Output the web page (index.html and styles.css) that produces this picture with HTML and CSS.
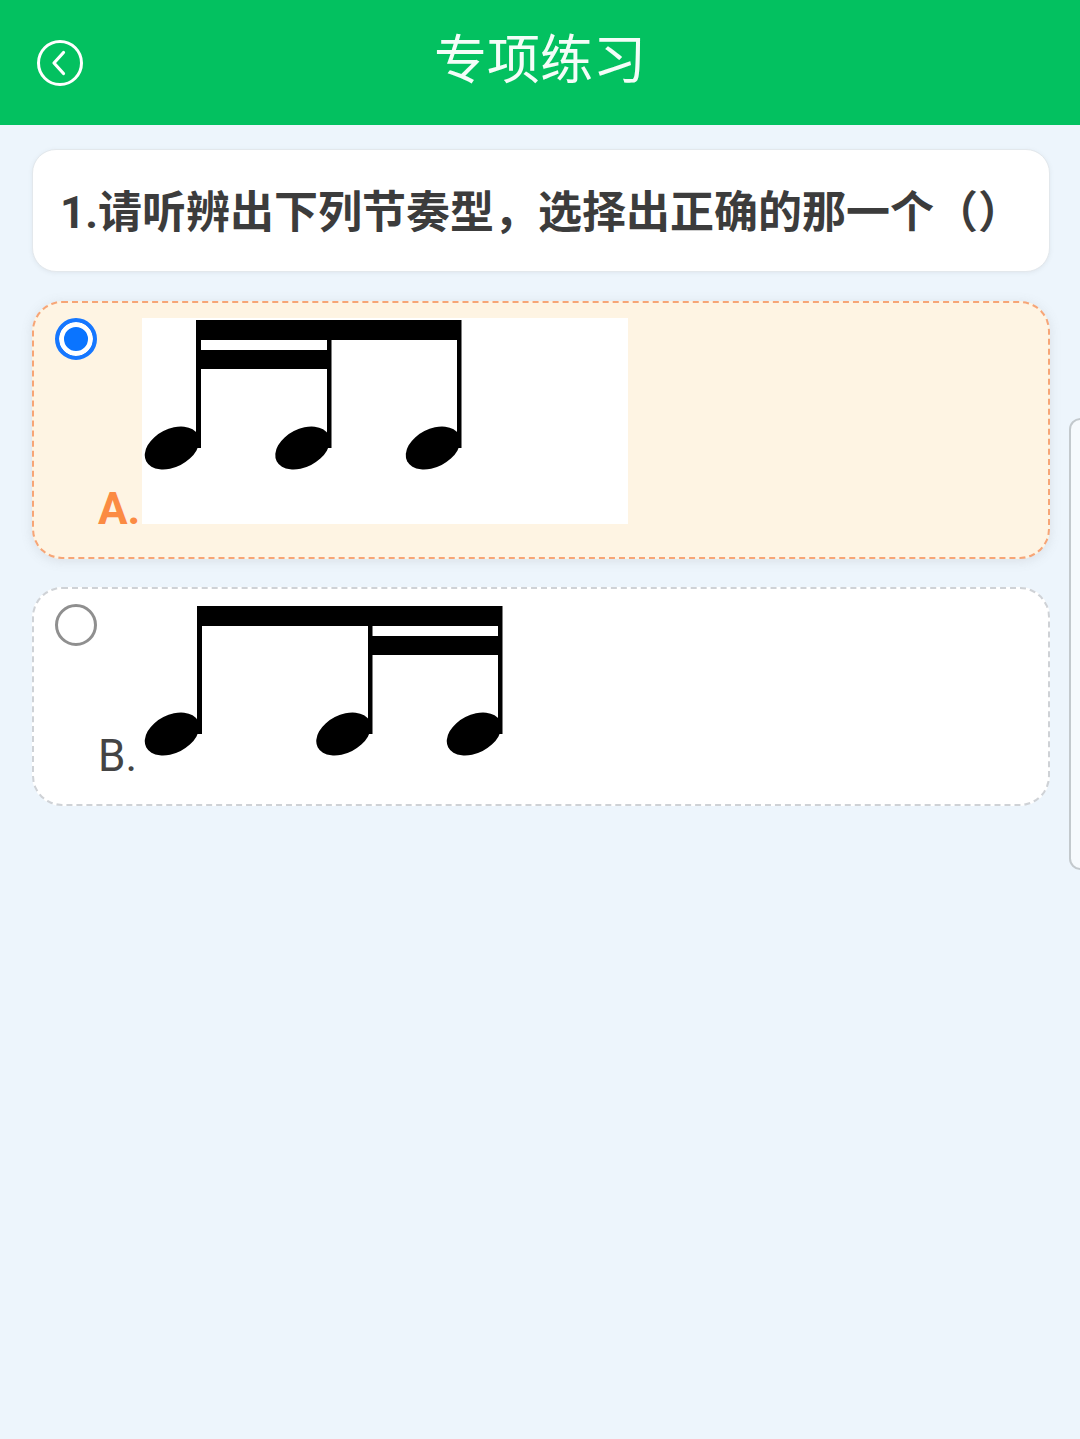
FILE: index.html
```html
<!DOCTYPE html>
<html lang="zh-CN">
<head>
<meta charset="utf-8">
<title>专项练习</title>
<link rel="stylesheet" href="styles.css">
</head>
<body>
<header class="topbar">
  <svg class="back" viewBox="0 0 48 48" aria-hidden="true">
    <ellipse cx="24" cy="24" rx="21.5" ry="21.5" fill="none" stroke="#fff" stroke-width="3"/>
    <path d="M27.5 13.5 L18 24 L27.5 34.5" fill="none" stroke="#fff" stroke-width="3.2" stroke-linecap="round" stroke-linejoin="round"/>
  </svg>
  <h1 class="title">专项练习</h1>
</header>

<main class="content">
  <section class="question">1.请听辨出下列节奏型，选择出正确的那一个（）</section>

  <div class="option option-selected">
    <span class="radio radio-on"></span>
    <div class="choice">
      <span class="letter">A.</span>
      <svg class="score score-a" viewBox="0 0 486 206" aria-hidden="true">
        <rect width="486" height="206" fill="#fff"/>
        <rect x="54" y="2" width="265" height="20"/>
        <rect x="54" y="32" width="134" height="19"/>
        <rect x="54" y="2" width="5" height="128"/>
        <rect x="185" y="2" width="4.5" height="128"/>
        <rect x="315" y="2" width="4.5" height="128"/>
        <ellipse cx="30" cy="130" rx="29" ry="19" transform="rotate(-27 30 130)"/>
        <ellipse cx="160.500" cy="130" rx="29" ry="19" transform="rotate(-27 160.500 130)"/>
        <ellipse cx="291" cy="130" rx="29" ry="19" transform="rotate(-27 291 130)"/>
      </svg>
    </div>
  </div>

  <div class="option">
    <span class="radio"></span>
    <div class="choice">
      <span class="letter">B.</span>
      <svg class="score score-b" viewBox="0 0 364 167" aria-hidden="true">
        <rect x="55" y="2" width="305" height="20"/>
        <rect x="226" y="32" width="134" height="19"/>
        <rect x="55" y="2" width="5" height="128"/>
        <rect x="226" y="2" width="4.5" height="128"/>
        <rect x="356" y="2" width="4.5" height="128"/>
        <ellipse cx="30" cy="130" rx="29" ry="19" transform="rotate(-27 30 130)"/>
        <ellipse cx="201.500" cy="130" rx="29" ry="19" transform="rotate(-27 201.500 130)"/>
        <ellipse cx="332" cy="130" rx="29" ry="19" transform="rotate(-27 332 130)"/>
      </svg>
    </div>
  </div>
</main>

<aside class="side-tab"></aside>
</body>
</html>
```

FILE: styles.css
```css
* {
  box-sizing: border-box;
}

html,
body {
  margin: 0;
  padding: 0;
}

body {
  position: relative;
  min-height: 1439px;
  overflow: hidden;
  background: #edf5fc;
  font-family: Roboto, "Noto Sans CJK SC", sans-serif;
}

.topbar {
  position: relative;
  display: flex;
  align-items: center;
  justify-content: center;
  height: 125px;
  background: #03c160;
}

.back {
  position: absolute;
  left: 36px;
  top: 39px;
  width: 48px;
  height: 48px;
}

.title {
  margin: 0 0 4px;
  font-size: 53px;
  line-height: 72px;
  font-weight: 400;
  color: #f4fdf8;
}

.content {
  display: flex;
  flex-direction: column;
  padding: 24px 30px 0 32px;
}

.question {
  display: flex;
  align-items: center;
  height: 123px;
  padding: 0 0 4px 27px;
  margin-bottom: 29px;
  background: #fff;
  border: 1px solid #e3e8ec;
  border-radius: 24px;
  box-shadow: 0 1px 4px rgba(120, 130, 140, 0.12);
  font-size: 44px;
  font-weight: 700;
  color: #3c3c3c;
  white-space: nowrap;
}

.option {
  display: flex;
  align-items: flex-start;
  padding: 15px 21px 33px;
  margin-bottom: 28px;
  background: #fff;
  border: 2px dashed #cfd2d6;
  border-radius: 30px;
}

.option-selected {
  background: #fef4e3;
  border-color: #f7a576;
  box-shadow: 0 2px 12px rgba(120, 120, 120, 0.16);
}

.radio {
  flex: none;
  width: 42px;
  height: 42px;
  margin-right: 1px;
  border: 3px solid #8f8f8f;
  border-radius: 50%;
  background: #fff;
}

.radio-on {
  border: 4px solid #1677ff;
  background: #0a74ff;
  box-shadow: inset 0 0 0 5px #fff;
}

.choice {
  display: flex;
  align-items: flex-end;
}

.letter {
  width: 44px;
  font-size: 44px;
  line-height: 30px;
  color: #444;
}

.option-selected .letter {
  font-weight: 700;
  color: #fb8b43;
}

.score {
  display: block;
  fill: #000;
}

.score-a {
  width: 486px;
  height: 206px;
}

.score-b {
  width: 364px;
  height: 167px;
}

.side-tab {
  position: absolute;
  top: 418px;
  right: -12px;
  width: 23px;
  height: 452px;
  background: #f6fafd;
  border: 2px solid #c3c9cd;
  border-radius: 12px;
}
```
